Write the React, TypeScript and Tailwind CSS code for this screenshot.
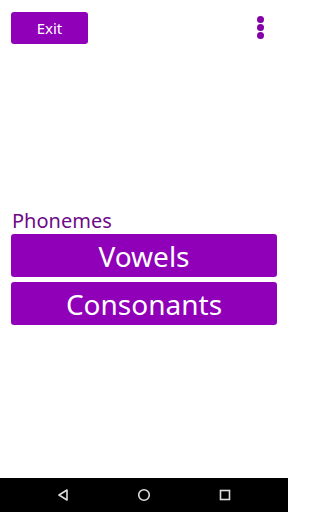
export default function App() {
  return (
    <div
      className="flex h-[512px] w-[288px] flex-col bg-white"
      style={{ fontFamily: '"Noto Sans", sans-serif' }}
    >
      <div className="flex items-start justify-between px-[11px] pt-[12px]">
        <button className="flex h-[32px] w-[77px] items-center justify-center rounded-[3px] bg-[#8f00b8] text-[15px] text-white">
          Exit
        </button>
        <div className="mr-[13px] mt-[4px] flex flex-col gap-[1px]">
          <span className="h-[7px] w-[7px] rounded-full bg-[#8400a8]" />
          <span className="h-[7px] w-[7px] rounded-full bg-[#8400a8]" />
          <span className="h-[7px] w-[7px] rounded-full bg-[#8400a8]" />
        </div>
      </div>

      <div className="flex flex-1 flex-col px-[11px] pt-[164px]">
        <div className="pl-[1px] text-[20px] leading-[26px] text-[#6e0a86]">Phonemes</div>
        <div className="flex flex-col gap-[5px]">
          <button className="flex h-[43px] w-full items-center justify-center rounded-[3px] bg-[#8f00b8] text-[28px] text-white">
            Vowels
          </button>
          <button className="flex h-[43px] w-full items-center justify-center rounded-[3px] bg-[#8f00b8] text-[28px] text-white">
            Consonants
          </button>
        </div>
      </div>

      <div className="flex h-[34px] items-center justify-between bg-black px-[56px]">
        <svg width="14" height="14" viewBox="0 0 14 14">
          <path d="M11 2 L3 7 L11 12 Z" fill="none" stroke="#ddd" strokeWidth="1.6" strokeLinejoin="round" />
        </svg>
        <svg width="14" height="14" viewBox="0 0 14 14">
          <circle cx="7" cy="7" r="5.3" fill="none" stroke="#ddd" strokeWidth="1.6" />
        </svg>
        <svg width="14" height="14" viewBox="0 0 14 14">
          <rect x="2.5" y="2.5" width="9" height="9" fill="none" stroke="#ddd" strokeWidth="1.6" />
        </svg>
      </div>
    </div>
  );
}
